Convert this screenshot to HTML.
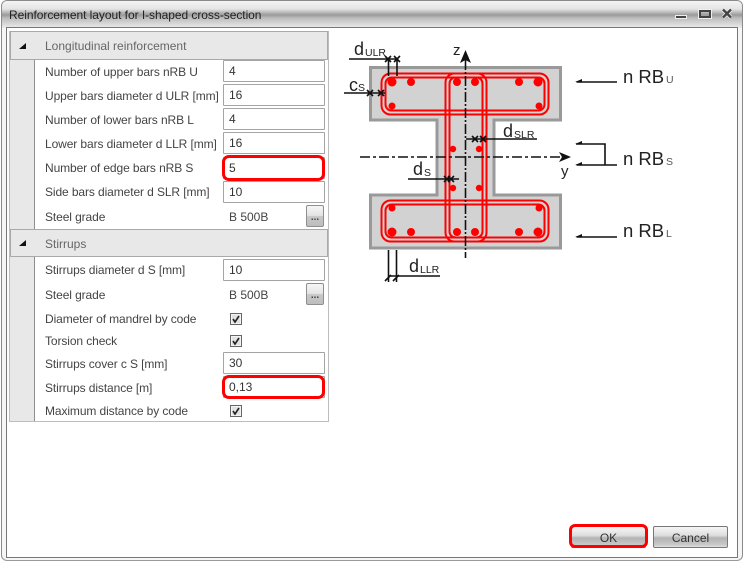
<!DOCTYPE html>
<html><head><meta charset="utf-8">
<style>
html,body{margin:0;padding:0}
body{width:744px;height:564px;position:relative;overflow:hidden;background:#fff;font-family:"Liberation Sans",sans-serif;color:#444}
.a{position:absolute}
#win{left:1px;top:0;width:742px;height:561px;border:1px solid #8a8a8a;border-bottom:1px solid #999;border-radius:6px 6px 6px 6px;box-sizing:border-box;background:#f6f6f6}
#tb{left:2px;top:1px;width:740px;height:27px;border-radius:5px 5px 0 0;background:linear-gradient(#f4f4f4 0,#e4e4e4 8px,#9a9a9a 14px,#bcbcbc 17px,#ececec 27px)}
#title{left:9px;top:8px;font-size:12px;color:#222;white-space:nowrap;letter-spacing:-.05px}
#content{left:6px;top:27px;width:732px;height:531px;background:#fff;border:1px solid #777;box-sizing:border-box}
#pl{left:9px;top:31px;width:320px;height:391px;box-sizing:border-box;border:1px solid #bdbdbd;border-top:none;background:#fff}
#gut{left:10px;top:31px;width:24px;height:390px;background:#e8e8e8;border-right:1px solid #8f8f8f}
.h{left:10px;width:318px;background:#e8e8e8;box-sizing:border-box;border:1px solid #a9a9a9;font-size:12px;color:#666}
.h span{position:absolute;left:34px;top:7px}
.tri{position:absolute;left:8px;top:11px;width:0;height:0;border-left:7px solid transparent;border-bottom:6px solid #111}
.l{left:45px;font-size:12px;color:#444;white-space:nowrap;letter-spacing:-.1px}
.f{left:223px;width:102px;box-sizing:border-box;background:#fff;border:1px solid #a4a4a4;font-size:12px;color:#333;padding-left:5px;line-height:20px;height:22px;border-radius:1px}
.v{left:229px;font-size:12px;color:#444}
.r{left:222px;width:103px;box-sizing:border-box;border:3px solid #f00;border-radius:7px;height:24px}
.b3{left:306px;width:18px;height:22px;box-sizing:border-box;border:1px solid #8f8f8f;border-radius:2px;background:linear-gradient(#f6f6f6,#e4e4e4 48%,#c8c8c8 52%,#bdbdbd);font-size:10px;line-height:24px;text-align:center;color:#444;font-weight:bold}
.c{left:230px;width:12px;height:12px;box-sizing:border-box;border:1px solid #666;background:#e2e2e2;box-shadow:inset 0 0 0 1px #f4f4f4}
.c svg{position:absolute;left:0;top:0}
.btn{box-sizing:border-box;border:1px solid #777;border-radius:2px;background:linear-gradient(#f5f5f5,#dedede 42%,#b4b4b4 55%,#c8c8c8 88%,#e0e0e0);font-size:12px;color:#333;text-align:center;line-height:22px}
svg text{font-family:"Liberation Sans",sans-serif}
</style></head><body>
<div class="a" id="win"></div>
<div class="a" id="tb"></div>
<div class="a" id="title">Reinforcement layout for I-shaped cross-section</div>
<div class="a" style="left:675px;top:15px;width:10px;height:2px;background:#444;border:1px solid #eee"></div>
<div class="a" style="left:699px;top:10px;width:8px;height:4px;border:2px solid #444;outline:1px solid #eee;box-sizing:content-box"></div>
<svg class="a" style="left:721px;top:8px" width="12" height="11"><path d="M2 1.5L10 9.5M10 1.5L2 9.5" stroke="#eee" stroke-width="4"/><path d="M2 1.5L10 9.5M10 1.5L2 9.5" stroke="#444" stroke-width="2.4"/></svg>
<div class="a" id="content"></div>

<div class="a" id="pl"></div>
<div class="a" id="gut"></div>
<div class="a h" style="top:31px;height:29px"><i class="tri"></i><span>Longitudinal reinforcement</span></div>
<div class="a h" style="top:229px;height:28px"><i class="tri" style="top:10px"></i><span>Stirrups</span></div>

<div class="a l" style="top:65px">Number of upper bars nRB U</div><div class="a f" style="top:60px">4</div>
<div class="a l" style="top:89px">Upper bars diameter d ULR [mm]</div><div class="a f" style="top:84px">16</div>
<div class="a l" style="top:113px">Number of lower bars nRB L</div><div class="a f" style="top:108px">4</div>
<div class="a l" style="top:137px">Lower bars diameter d LLR [mm]</div><div class="a f" style="top:132px">16</div>
<div class="a l" style="top:161px">Number of edge bars nRB S</div><div class="a f" style="top:157px">5</div><div class="a r" style="top:155px;height:26px"></div>
<div class="a l" style="top:185px">Side bars diameter d SLR [mm]</div><div class="a f" style="top:181px">10</div>
<div class="a l" style="top:210px">Steel grade</div><div class="a v" style="top:210px">B 500B</div><div class="a b3" style="top:205px">...</div>

<div class="a l" style="top:263px">Stirrups diameter d S [mm]</div><div class="a f" style="top:259px">10</div>
<div class="a l" style="top:288px">Steel grade</div><div class="a v" style="top:288px">B 500B</div><div class="a b3" style="top:283px">...</div>
<div class="a l" style="top:312px">Diameter of mandrel by code</div><div class="a c" style="top:313px"><svg width="10" height="10"><path d="M2 5 L4 8 L8 2" fill="none" stroke="#222" stroke-width="1.6"/></svg></div>
<div class="a l" style="top:334px">Torsion check</div><div class="a c" style="top:335px"><svg width="10" height="10"><path d="M2 5 L4 8 L8 2" fill="none" stroke="#222" stroke-width="1.6"/></svg></div>
<div class="a l" style="top:357px">Stirrups cover c S [mm]</div><div class="a f" style="top:352px">30</div>
<div class="a l" style="top:381px">Stirrups distance [m]</div><div class="a f" style="top:376px">0,13</div><div class="a r" style="top:375px"></div>
<div class="a l" style="top:404px">Maximum distance by code</div><div class="a c" style="top:405px"><svg width="10" height="10"><path d="M2 5 L4 8 L8 2" fill="none" stroke="#222" stroke-width="1.6"/></svg></div>

<svg class="a" style="left:0;top:0" width="744" height="300" viewBox="0 0 744 300">
<path d="M370.5 67.5H560.5V120H494V195H560.5V248H370.5V195H437V120H370.5Z" fill="#d2d2d2" stroke="#999" stroke-width="3"/>
<g fill="none" stroke="#f00" stroke-width="2">
<rect x="381.5" y="73.5" width="167" height="41" rx="9"/>
<rect x="385.5" y="77.5" width="159" height="33" rx="6"/>
<rect x="381.5" y="200.5" width="167" height="41" rx="9"/>
<rect x="385.5" y="204.5" width="159" height="33" rx="6"/>
<rect x="445.5" y="73.5" width="41" height="168" rx="9"/>
<rect x="449.5" y="77.5" width="33" height="160" rx="6"/>
</g>
<g fill="#f00">
<circle cx="392" cy="82" r="4.5"/><circle cx="411" cy="82" r="4"/><circle cx="457" cy="82" r="4"/><circle cx="475" cy="82" r="4"/><circle cx="519" cy="82" r="4"/><circle cx="538" cy="82" r="4.5"/>
<circle cx="392" cy="106" r="3.5"/><circle cx="539" cy="106" r="3.5"/>
<circle cx="453" cy="149" r="3.2"/><circle cx="479" cy="149" r="3.2"/><circle cx="453" cy="188" r="3.2"/><circle cx="479" cy="188" r="3.2"/>
<circle cx="392" cy="208" r="3.5"/><circle cx="539" cy="208" r="3.5"/>
<circle cx="392" cy="232" r="4.5"/><circle cx="411" cy="232" r="4"/><circle cx="457" cy="232" r="4"/><circle cx="475" cy="232" r="4"/><circle cx="519" cy="232" r="4"/><circle cx="538" cy="232" r="4.5"/>
</g>
<g fill="none" stroke="#111" stroke-width="1.6">
<path d="M465.5 60V258" stroke-dasharray="10 2 2 2"/>
<path d="M360 157H562" stroke-dasharray="10 3 3 3"/>
<path d="M349 59H397M388.5 58V76M397 58V76M344 93H385M466 139H537M408 179H459M388.5 250V282M396.5 250V282M388 276H440"/>
<path d="M385 62l6-6M394 62l6-6M385 56l6 6M394 56l6 6M367 96l6-6M378 96l6-6M367 90l6 6M378 90l6 6M472 142l6-6M480 142l6-6M472 136l6 6M480 136l6 6M444 182l6-6M448 182l6-6M444 176l6 6M448 176l6 6M385 281l6-6M393 281l6-6"/>
<path d="M576.5 82H617M576.5 165H617M605 165V144H576M576.5 237H617" stroke-width="1.6"/>
</g>
<path d="M465.5 50L471 63L465.5 60L460 63ZM571 157L559 152L562 157L559 162Z" fill="#111"/>
<path d="M575 82l7-3v3ZM575 165l7-3v3ZM575 144l7-3v3ZM575 237l7-3v3Z" fill="#111"/>
<g fill="#222">
<text x="354" y="55" font-size="18">d</text><text x="365" y="56" font-size="10.5">ULR</text>
<text x="349" y="91" font-size="18">c</text><text x="358" y="91" font-size="10.5">S</text>
<text x="503" y="137" font-size="18">d</text><text x="514" y="138" font-size="10.5">SLR</text>
<text x="413" y="175" font-size="18">d</text><text x="424" y="176" font-size="10.5">S</text>
<text x="409" y="272" font-size="18">d</text><text x="420" y="273" font-size="10.5">LLR</text>
<text x="453" y="55" font-size="15">z</text>
<text x="561" y="176" font-size="15">y</text>
<text x="623" y="83" font-size="18.5">n RB</text><text x="666" y="83" font-size="10.5" fill="#555">U</text>
<text x="623" y="165" font-size="18.5">n RB</text><text x="666" y="165" font-size="10.5" fill="#555">S</text>
<text x="623" y="237" font-size="18.5">n RB</text><text x="666" y="237" font-size="10.5" fill="#555">L</text>
</g>
</svg>

<div class="a btn" style="left:571px;top:526px;width:75px;height:22px">OK</div>
<div class="a" style="left:569px;top:524px;width:79px;height:24px;box-sizing:border-box;border:3px solid #f00;border-radius:6px"></div>
<div class="a btn" style="left:653px;top:526px;width:75px;height:22px">Cancel</div>
</body></html>
